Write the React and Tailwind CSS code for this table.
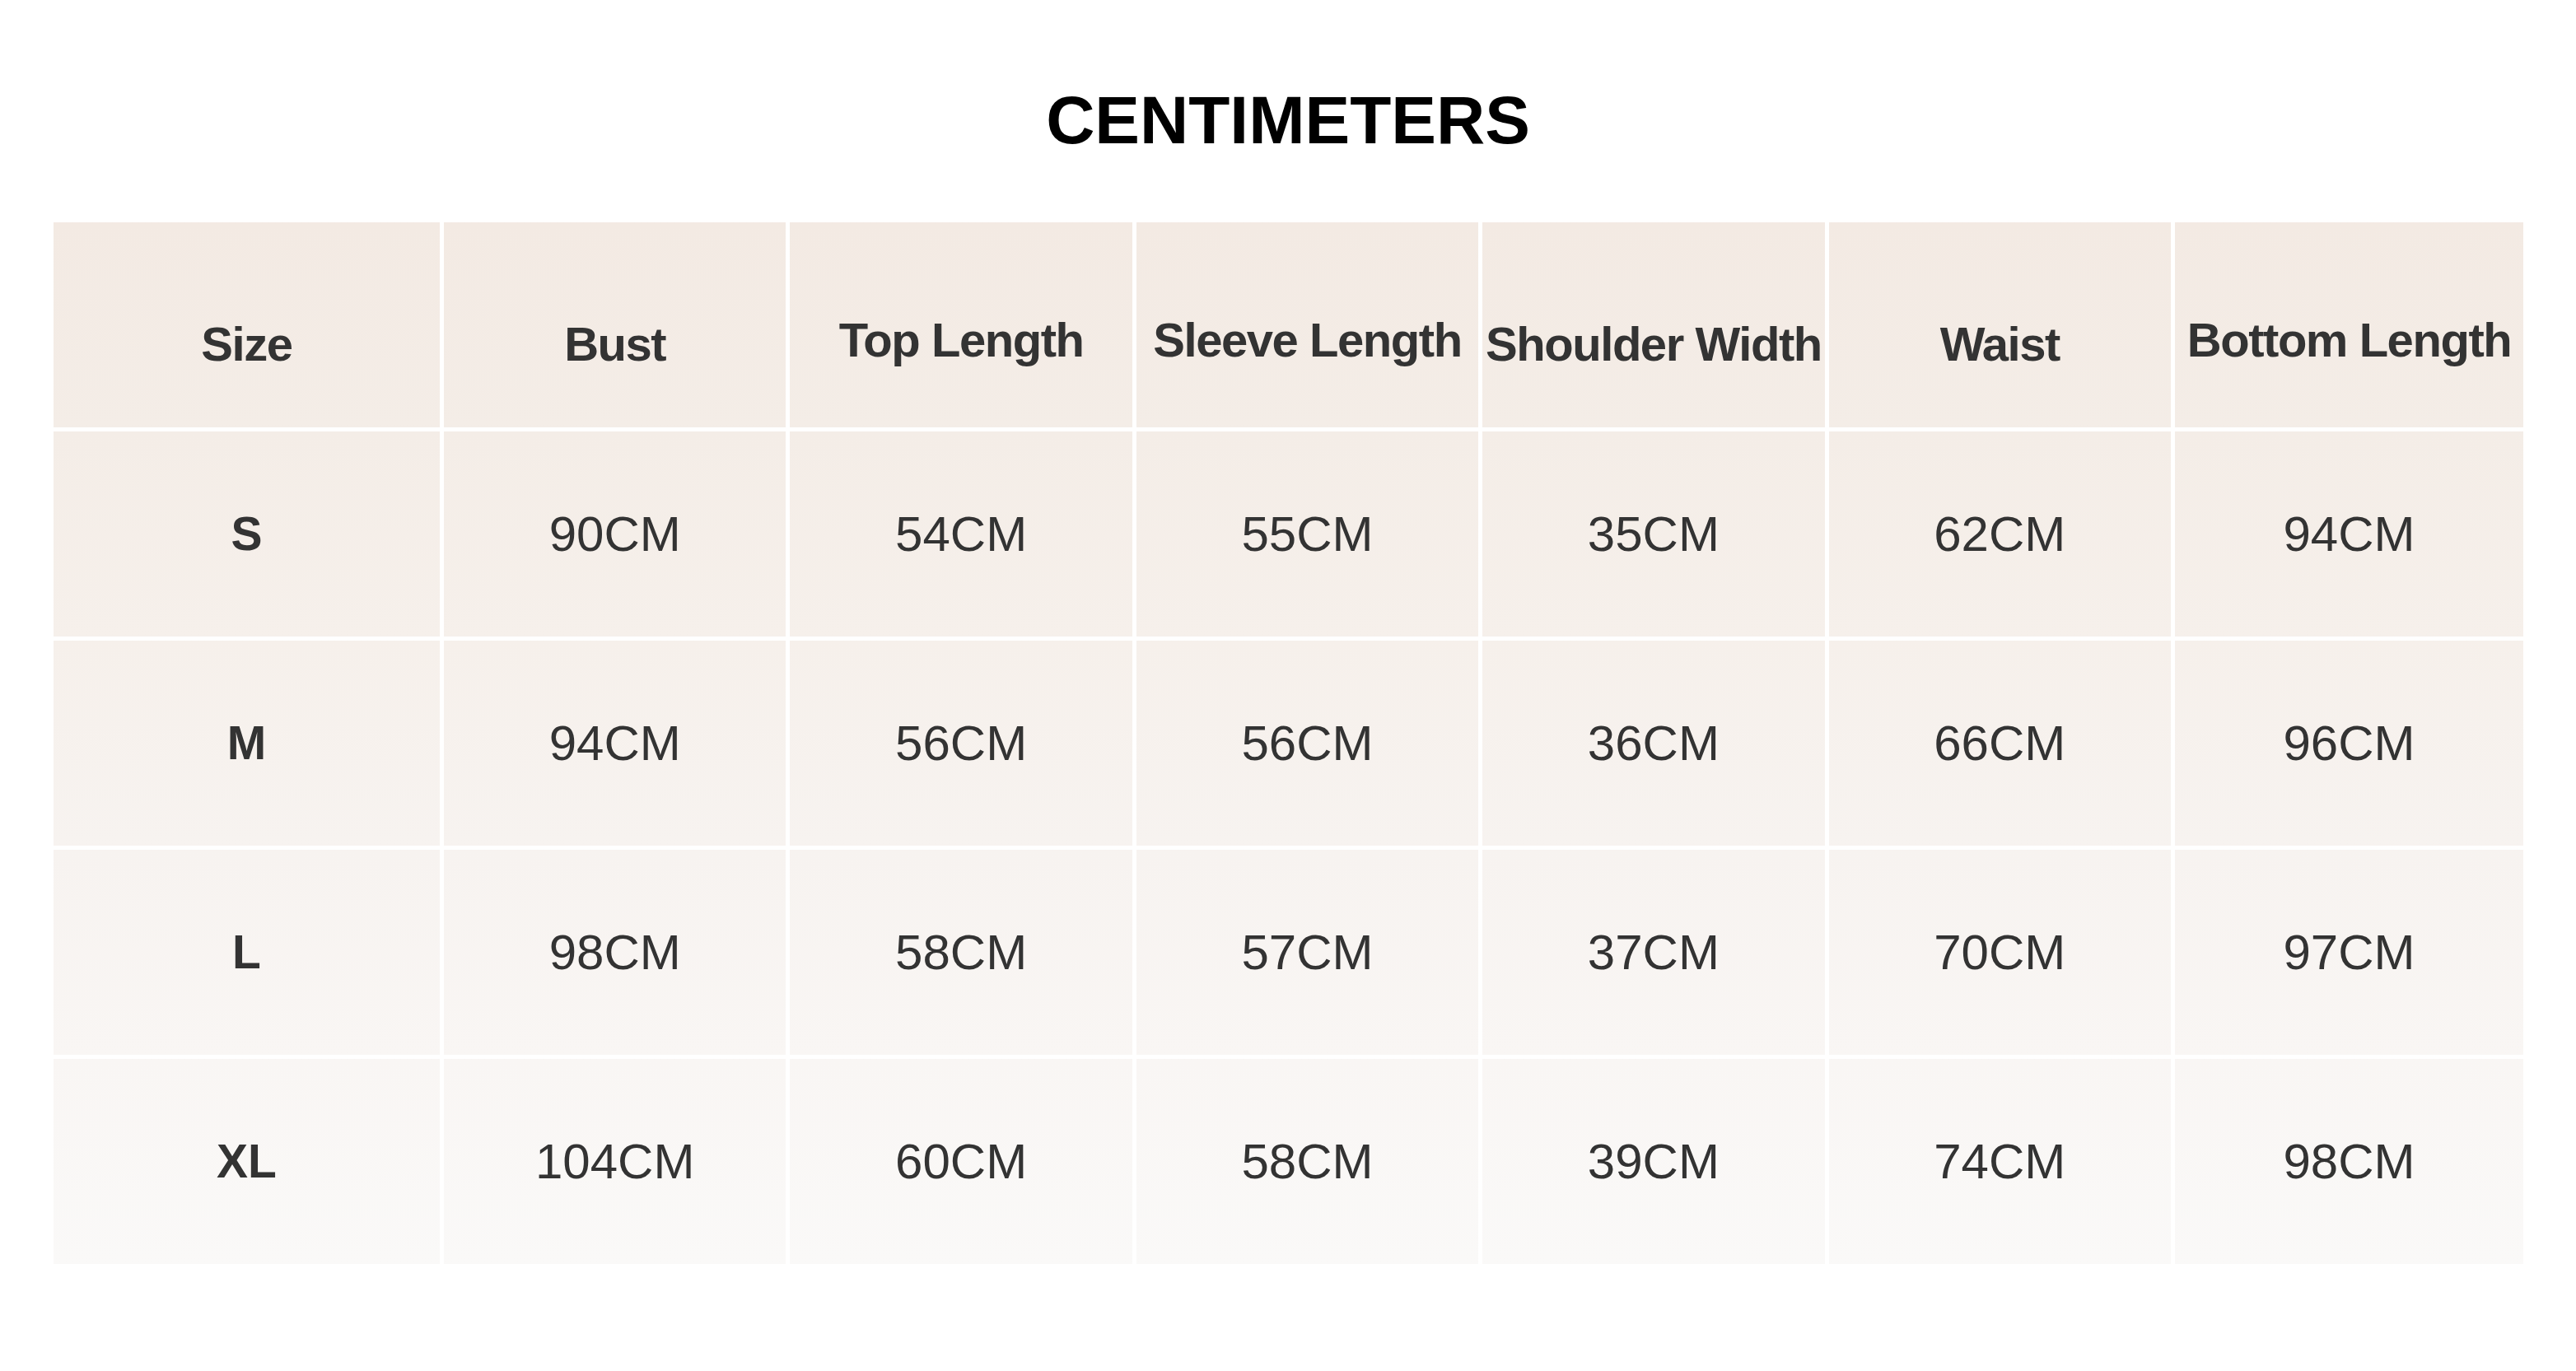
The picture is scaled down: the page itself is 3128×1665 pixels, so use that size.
const headers = [
  { label: 'Size', lift: false },
  { label: 'Bust', lift: false },
  { label: 'Top Length', lift: true },
  { label: 'Sleeve Length', lift: true },
  { label: 'Shoulder Width', lift: false },
  { label: 'Waist', lift: false },
  { label: 'Bottom Length', lift: true },
];

const rows = [
  { size: 'S', values: ['90CM', '54CM', '55CM', '35CM', '62CM', '94CM'], bg: 'from-[#f4ede7] to-[#f6f0eb]' },
  { size: 'M', values: ['94CM', '56CM', '56CM', '36CM', '66CM', '96CM'], bg: 'from-[#f6f0eb] to-[#f7f3f0]' },
  { size: 'L', values: ['98CM', '58CM', '57CM', '37CM', '70CM', '97CM'], bg: 'from-[#f7f3f0] to-[#f9f6f4]' },
  { size: 'XL', values: ['104CM', '60CM', '58CM', '39CM', '74CM', '98CM'], bg: 'from-[#f9f6f4] to-[#faf9f8]' },
];

const cols = 'grid h-[249px] grid-cols-[469px_repeat(5,minmax(0,1fr))_423px] gap-x-[5px]';

export default function App() {
  return (
    <div className="min-h-screen bg-white font-['Liberation_Sans',Arial,sans-serif] text-[#333333]">
      <h1 className="pt-[105px] text-center text-[82px] font-bold leading-none text-black">CENTIMETERS</h1>

      <div className="mt-[83px] ml-[65px] flex w-[2999px] flex-col gap-[5px]">
        {/* header row */}
        <div className={cols}>
          {headers.map(h => (
            <div key={h.label}
              className={`flex items-center justify-center bg-linear-to-b from-[#f3eae3] to-[#f4ede7] ${h.lift ? 'pt-[36px]' : 'pt-[46px]'}`}>
              <span className="text-[58px] font-bold leading-none tracking-[-0.025em] whitespace-nowrap">{h.label}</span>
            </div>
          ))}
        </div>

        {rows.map(r => (
          <div key={r.size} className={cols}>
            <div className={`flex items-center justify-center bg-linear-to-b ${r.bg}`}>
              <span className="text-[57px] font-bold leading-none">{r.size}</span>
            </div>
            {r.values.map((v, i) => (
              <div key={i} className={`flex items-center justify-center bg-linear-to-b ${r.bg}`}>
                <span className="text-[60px] leading-none">{v}</span>
              </div>
            ))}
          </div>
        ))}
      </div>
    </div>
  );
}
